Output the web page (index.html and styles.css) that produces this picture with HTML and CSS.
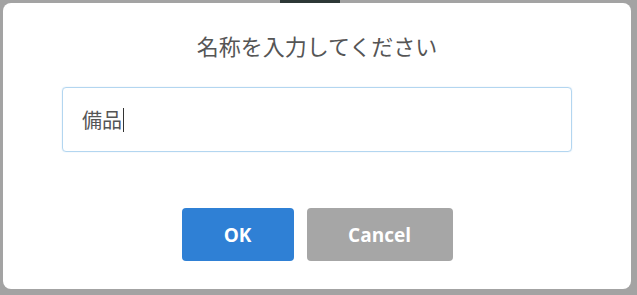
FILE: index.html
```html
<!DOCTYPE html>
<html lang="ja">
<head>
    <meta charset="UTF-8">
    <meta name="viewport" content="width=device-width, initial-scale=1.0">
    <title>名称入力</title>
    <link rel="stylesheet" href="styles.css">
</head>
<body>
    <div class="backdrop-tab"></div>
    <div class="dialog">
        <h2 class="dialog-title">名称を入力してください</h2>
        <div class="name-field">
            <span class="name-value">備品</span><span class="caret"></span>
        </div>
        <div class="actions">
            <button class="button ok">OK</button>
            <button class="button cancel">Cancel</button>
        </div>
    </div>
</body>
</html>
```

FILE: styles.css
```css
body {
    margin: 0;
    width: 637px;
    height: 295px;
    overflow: hidden;
    background-color: #a3a3a3; /* dimmed page behind the dialog */
    font-family: "Open Sans", "Noto Sans CJK JP", sans-serif;
}
.backdrop-tab {
    width: 60px;
    height: 3px;
    margin-left: 280px;
    background-color: #2d3836;
}
.dialog {
    margin-left: 3px;
    width: 628px;
    height: 286px;
    border-radius: 8px;
    background-color: #fff;
    display: flex;
    flex-direction: column;
    align-items: center;
}
.dialog-title {
    margin: 28px 0 0;
    font-size: 22px;
    font-weight: normal;
    line-height: 28px;
    color: #555;
    font-family: "Noto Sans CJK JP", sans-serif;
}
.name-field {
    margin-top: 28px;
    width: 510px;
    height: 65px;
    border: 1px solid #b3d6f0;
    border-radius: 4px;
    box-sizing: border-box;
    display: flex;
    align-items: center;
    padding-left: 19px;
    box-shadow: 0 0 1px rgba(102, 175, 233, 0.5);
}
.name-value {
    font-size: 20px;
    color: #555;
    font-family: "Noto Sans CJK JP", sans-serif;
}
.caret {
    width: 1px;
    height: 24px;
    margin-left: 1px;
    background-color: #333;
}
.actions {
    margin-top: 56px;
    display: flex;
    gap: 13px;
}
.button {
    height: 53px;
    border: none;
    border-radius: 4px;
    color: #fff;
    font-family: "Open Sans", sans-serif;
    font-weight: bold;
    font-size: 19px;
}
.ok {
    width: 112px;
    background-color: #2f80d5;
}
.cancel {
    width: 146px;
    background-color: #a6a6a6;
}
```
